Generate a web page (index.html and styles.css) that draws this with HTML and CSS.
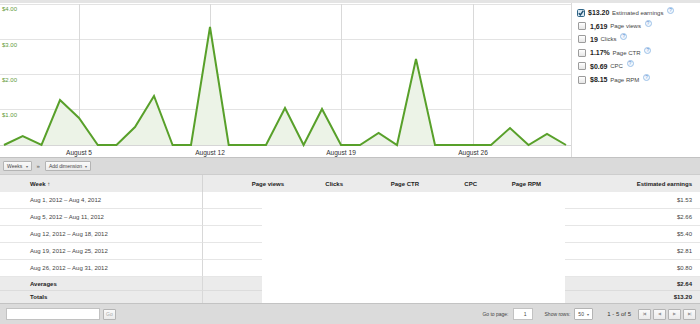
FILE: index.html
```html
<!DOCTYPE html>
<html lang="en">

<head>
    <meta charset="UTF-8" />
    <title>Performance report</title>
    <link rel="stylesheet" href="styles.css">
</head>

<body>
    <div class="report">
        <div class="chart-panel">
            <svg class="chart" width="571" height="154" viewBox="0 3 571 154">
                <g class="grid-h">
                    <line x1="0" y1="4.5" x2="571" y2="4.5" />
                    <line x1="0" y1="39.5" x2="571" y2="39.5" />
                    <line x1="0" y1="74.5" x2="571" y2="74.5" />
                    <line x1="0" y1="109.5" x2="571" y2="109.5" />
                    <line class="base" x1="0" y1="145.5" x2="571" y2="145.5" />
                </g>
                <g class="grid-v">
                    <line x1="79.5" y1="4" x2="79.5" y2="145" />
                    <line x1="210.5" y1="4" x2="210.5" y2="145" />
                    <line x1="341.5" y1="4" x2="341.5" y2="145" />
                    <line x1="473.5" y1="4" x2="473.5" y2="145" />
                </g>
                <polygon class="area" points="4,145 22.7,136 41.5,145 60,100 79,118 97.8,145 116.5,145 135,127 154,96 172.6,145 191,145 210,27 228.7,145 247.4,145 266,145 285,108 303.6,145 322,109 341,145 360,145 378.6,133 397,145 416,59 435,145 453.6,145 472.4,145 491,145 510,128 528.5,145 547,134 566,145" />
                <polyline class="line" points="4,145 22.7,136 41.5,145 60,100 79,118 97.8,145 116.5,145 135,127 154,96 172.6,145 191,145 210,27 228.7,145 247.4,145 266,145 285,108 303.6,145 322,109 341,145 360,145 378.6,133 397,145 416,59 435,145 453.6,145 472.4,145 491,145 510,128 528.5,145 547,134 566,145" />
                <g class="y-labels">
                    <text x="2" y="11.3">$4.00</text>
                    <text x="2" y="47.3">$3.00</text>
                    <text x="2" y="82.3">$2.00</text>
                    <text x="2" y="117.3">$1.00</text>
                </g>
                <g class="x-labels">
                    <text x="79" y="154.5">August 5</text>
                    <text x="210" y="154.5">August 12</text>
                    <text x="341" y="154.5">August 19</text>
                    <text x="473" y="154.5">August 26</text>
                </g>
            </svg>

            <ul class="legend">
                <li>
                    <svg class="check on" width="8" height="8" viewBox="0 0 8 8">
                        <rect x="0.5" y="0.5" width="7" height="7" rx="1" />
                        <path d="M1.8 4.2 L3.4 5.8 L6.4 1.6" />
                    </svg>
                    <b>$13.20</b> Estimated earnings <span class="help">?</span>
                </li>
                <li><span class="check"></span><b>1,619</b> Page views <span class="help">?</span></li>
                <li><span class="check"></span><b>19</b> Clicks <span class="help">?</span></li>
                <li><span class="check"></span><b>1.17%</b> Page CTR <span class="help">?</span></li>
                <li><span class="check"></span><b>$0.69</b> CPC <span class="help">?</span></li>
                <li><span class="check"></span><b>$8.15</b> Page RPM <span class="help">?</span></li>
            </ul>
        </div>

        <div class="toolbar">
            <span class="btn">Weeks <i>&#9662;</i></span>
            <span class="sep">&raquo;</span>
            <span class="btn">Add dimension <i>&#9662;</i></span>
        </div>

        <div class="table">
            <div class="head">
                <span class="week">Week &#8593;</span>
                <span>Page views</span>
                <span>Clicks</span>
                <span>Page CTR</span>
                <span>CPC</span>
                <span>Page RPM</span>
                <span>Estimated earnings</span>
            </div>
            <div class="row"><span class="week">Aug 1, 2012 – Aug 4, 2012</span><span class="pv"></span><span class="blank"></span><span class="earn">$1.53</span></div>
            <div class="row"><span class="week">Aug 5, 2012 – Aug 11, 2012</span><span class="pv"></span><span class="blank"></span><span class="earn">$2.66</span></div>
            <div class="row"><span class="week">Aug 12, 2012 – Aug 18, 2012</span><span class="pv"></span><span class="blank"></span><span class="earn">$5.40</span></div>
            <div class="row"><span class="week">Aug 19, 2012 – Aug 25, 2012</span><span class="pv"></span><span class="blank"></span><span class="earn">$2.81</span></div>
            <div class="row"><span class="week">Aug 26, 2012 – Aug 31, 2012</span><span class="pv"></span><span class="blank"></span><span class="earn">$0.80</span></div>
            <div class="row sum avg"><span class="week">Averages</span><span class="pv"></span><span class="blank"></span><span class="earn">$2.64</span></div>
            <div class="row sum total"><span class="week">Totals</span><span class="pv"></span><span class="blank"></span><span class="earn">$13.20</span></div>
        </div>

        <div class="footer">
            <div class="search">
                <span class="input wide"></span>
                <span class="btn go">Go</span>
            </div>
            <div class="pager">
                <span class="lbl">Go to page:</span>
                <span class="input page">1</span>
                <span class="lbl">Show rows:</span>
                <span class="btn rows">50 <i>&#9662;</i></span>
                <span class="count">1 - 5 of 5</span>
                <span class="nav">
                    <span class="btn pg">|&#9664;</span>
                    <span class="btn pg">&#9664;</span>
                    <span class="btn pg">&#9654;</span>
                    <span class="btn pg">&#9654;|</span>
                </span>
            </div>
        </div>
    </div>
</body>

</html>
```

FILE: styles.css
```css
body {
    margin: 0;
    font-family: "Liberation Sans", Arial, sans-serif;
    color: #333;
    background: #fff;
}

.report {
    width: 700px;
}

/* chart + legend */

.chart-panel {
    display: flex;
    height: 154px;
    border-top: 3px solid #e4e4e4;
}

.chart {
    display: block;
    flex: none;
}

.grid-h line {
    stroke: #e3e3e3;
    stroke-width: 1;
}

.grid-h .base {
    stroke: #d6d6d6;
}

.grid-v line {
    stroke: #d9d9d9;
    stroke-width: 1;
}

.area {
    fill: #ecf3e7;
    stroke: none;
}

.line {
    fill: none;
    stroke: #58a02a;
    stroke-width: 2;
    stroke-linejoin: miter;
}

.y-labels text {
    font-family: "Liberation Sans", Arial, sans-serif;
    font-size: 6px;
    fill: #5f9a3a;
}

.x-labels text {
    font-family: "Liberation Sans", Arial, sans-serif;
    font-size: 6.6px;
    fill: #333;
    text-anchor: middle;
}

.legend {
    list-style: none;
    margin: 0;
    padding: 3px 0 0 5px;
    flex: 1;
    border-left: 1px solid #dadada;
}

.legend li {
    display: flex;
    align-items: center;
    height: 13.4px;
    font-size: 6px;
    color: #444;
    white-space: pre;
}

.legend b {
    font-size: 7px;
    color: #222;
    margin-right: 1px;
}

.check {
    display: inline-block;
    width: 6px;
    height: 6px;
    margin: 0 4px 0 1px;
    border: 1px solid #9c9c9c;
    border-radius: 1px;
    background: linear-gradient(#fff, #e6e6e6);
}

svg.check {
    width: 8px;
    height: 8px;
    margin: 0 3px 0 0;
    border: none;
    background: none;
}

.check rect {
    fill: #d8e7f2;
    stroke: #2f6586;
}

.check path {
    fill: none;
    stroke: #1d4d6e;
    stroke-width: 1.4;
}

.help {
    display: inline-block;
    width: 5px;
    height: 5px;
    margin: -5px 0 0 2px;
    border: 1px solid #9dc2e8;
    border-radius: 50%;
    background: #f2f7fd;
    color: #5a8fd0;
    font-size: 4.5px;
    line-height: 5px;
    text-align: center;
}

/* toolbar */

.toolbar {
    display: flex;
    align-items: center;
    gap: 4px;
    height: 16px;
    padding-left: 3px;
    border-top: 1px solid #c2c2c2;
    background: #dadada;
}

.btn {
    display: inline-flex;
    align-items: center;
    justify-content: center;
    height: 8px;
    padding: 0 3px;
    border: 1px solid #b4b4b4;
    border-radius: 1px;
    background: linear-gradient(#fafafa, #ebebeb);
    font-size: 5px;
    color: #444;
    white-space: pre;
}

.btn i {
    font-style: normal;
    font-size: 4px;
    margin-left: 2px;
    color: #666;
}

.sep {
    font-size: 6px;
    color: #555;
    margin: 0 1px;
}

/* table */

.head {
    display: grid;
    grid-template-columns: 203px 89px 59px 76px 58px 64px 151px;
    height: 18px;
    background: #ebebeb;
    border-top: 1px solid #cdcdcd;
    box-sizing: border-box;
}

.head span {
    display: flex;
    align-items: center;
    justify-content: flex-end;
    padding-right: 8px;
    font-size: 6px;
    font-weight: bold;
    color: #222;
}

.head .week {
    justify-content: flex-start;
    padding-left: 30px;
    border-right: 1px solid #d4d4d4;
}

.row {
    display: grid;
    grid-template-columns: 203px 59px 303px 135px;
    height: 17px;
}

.row span {
    display: flex;
    align-items: center;
    font-size: 6px;
    color: #444;
    border-bottom: 1px solid #e6e6e6;
}

.row .week {
    padding-left: 30px;
    border-right: 1px solid #d8d8d8;
}

.row .blank {
    border-bottom: none;
}

.row .earn {
    justify-content: flex-end;
    padding-right: 8px;
}

.sum {
    height: 14px;
}

.sum.total {
    height: 12px;
}

.sum span {
    background: #ebebeb;
    font-weight: bold;
    color: #222;
    border-bottom-color: #dcdcdc;
}

.sum .blank {
    background: #fff;
}

.sum.total span {
    border-bottom: none;
}

/* footer */

.footer {
    display: flex;
    align-items: center;
    justify-content: space-between;
    height: 20px;
    padding: 0 4px 0 6px;
    border-top: 1px solid #c3c3c3;
    background: #dbdbdb;
}

.search,
.pager,
.nav {
    display: flex;
    align-items: center;
}

.input {
    display: inline-block;
    height: 11px;
    border: 1px solid #c2c2c2;
    background: #fff;
    box-sizing: border-box;
}

.input.wide {
    width: 94px;
    height: 12px;
}

.btn.go {
    height: 9px;
    margin-left: 3px;
    padding: 0 2px;
    color: #aaa;
}

.lbl {
    font-size: 5px;
    color: #444;
    margin-right: 4px;
}

.input.page {
    width: 20px;
    height: 12px;
    margin-right: 12px;
    padding-right: 5px;
    font-size: 5px;
    color: #444;
    text-align: right;
    line-height: 11px;
}

.btn.rows {
    height: 10px;
    margin-right: 14px;
    background: #fff;
}

.count {
    font-size: 6px;
    color: #333;
    margin-right: 5px;
}

.btn.pg {
    width: 5px;
    height: 9px;
    margin-left: 2px;
    padding: 0 3px;
    font-size: 3.5px;
    color: #999;
    letter-spacing: -0.5px;
}
```
